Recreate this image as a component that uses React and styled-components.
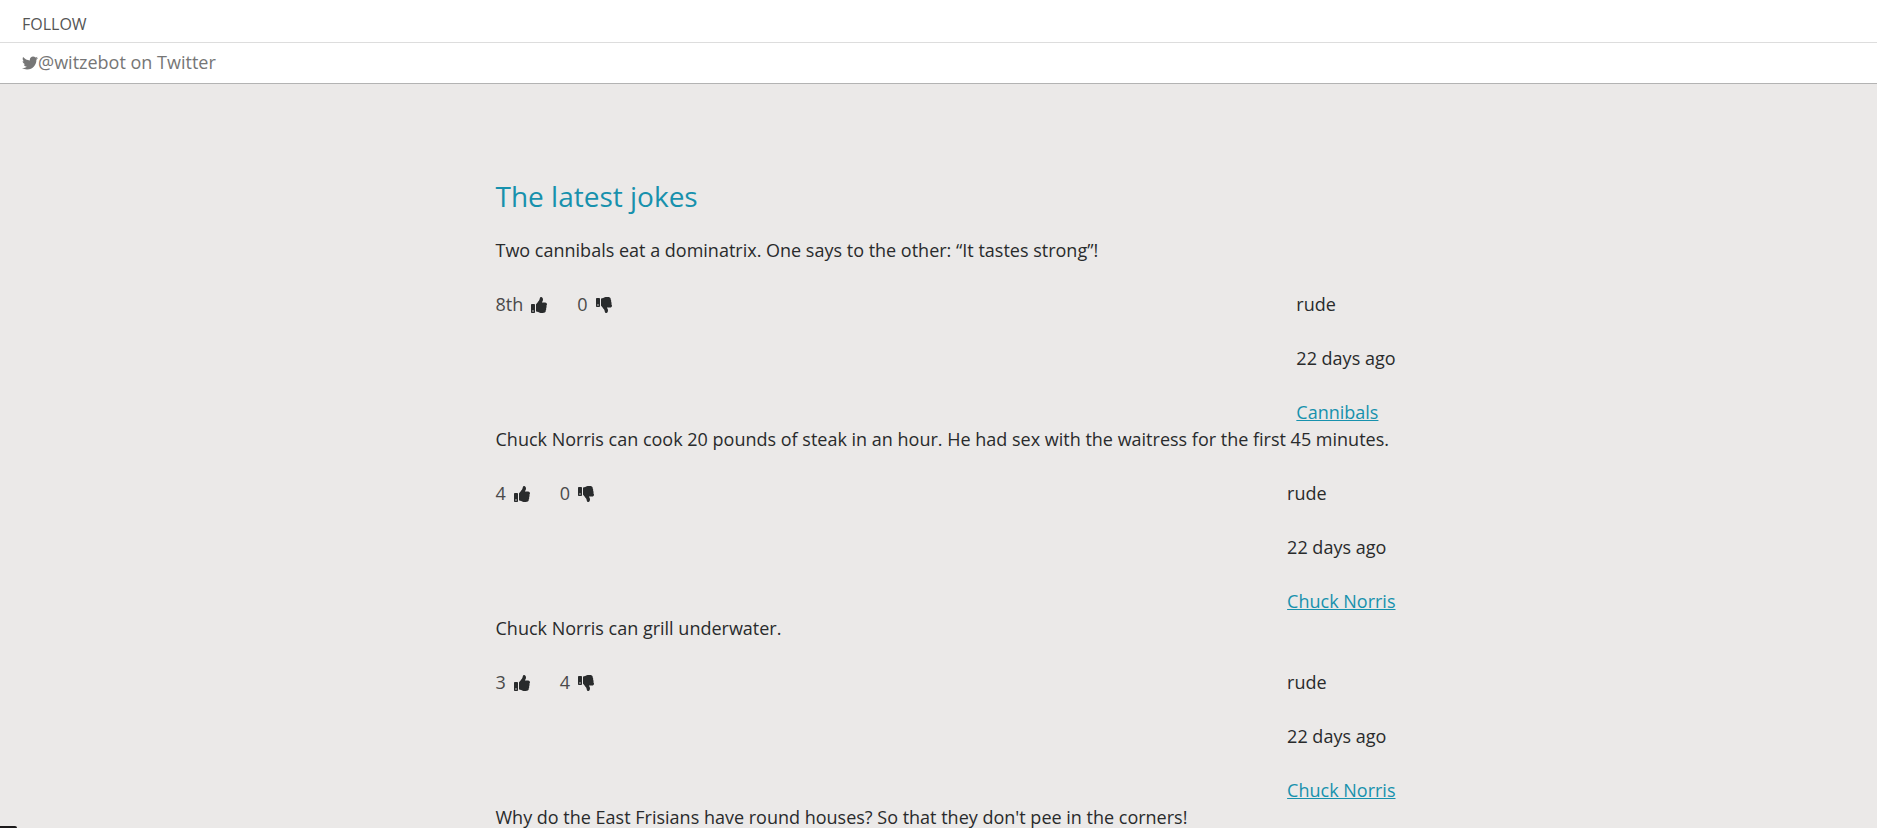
import styled, { createGlobalStyle } from "styled-components";
import { FaThumbsDown, FaThumbsUp, FaTwitter } from "react-icons/fa";

const jokes = [
    {
        id: 1,
        text: "Two cannibals eat a dominatrix. One says to the other: “It tastes strong”!",
        up: "8th",
        down: "0",
        tag: "rude",
        date: "22 days ago",
        category: "Cannibals",
    },
    {
        id: 2,
        text: "Chuck Norris can cook 20 pounds of steak in an hour. He had sex with the waitress for the first 45 minutes.",
        up: "4",
        down: "0",
        tag: "rude",
        date: "22 days ago",
        category: "Chuck Norris",
    },
    {
        id: 3,
        text: "Chuck Norris can grill underwater.",
        up: "3",
        down: "4",
        tag: "rude",
        date: "22 days ago",
        category: "Chuck Norris",
    },
    {
        id: 4,
        text: "Why do the East Frisians have round houses? So that they don't pee in the corners!",
    },
];

function Joke({ joke }) {
    const { text, up, down, tag, date, category } = joke;

    return (
        <JokeContainer>
            <p>{text}</p>
            {category && (
                <JokeFooter>
                    <Votes>
                        <VoteButton aria-label={`${up} like`}>{up} <FaThumbsUp /></VoteButton>
                        <VoteButton aria-label={`${down} dislike`}>{down} <FaThumbsDown /></VoteButton>
                    </Votes>
                    <JokeInfo>
                        <p>{tag}</p>
                        <p>{date}</p>
                        <CategoryLink href="#category">{category}</CategoryLink>
                    </JokeInfo>
                </JokeFooter>
            )}
        </JokeContainer>
    )
}

export default function App() {
    return (
        <>
            <GlobalStyle />
            <Header>
                <FollowTitle>FOLLOW</FollowTitle>
                <TwitterLink href="#twitter"><FaTwitter />@witzebot on Twitter</TwitterLink>
            </Header>
            <Main>
                <Title>The latest jokes</Title>
                {jokes.map((joke) => <Joke key={joke.id} joke={joke} />)}
            </Main>
            <CornerTab />
        </>
    )
}

const GlobalStyle = createGlobalStyle`
* {
    box-sizing: border-box;
}
html {
    scrollbar-width: none;
}
body {
    margin: 0;
    background: #ebe9e8;
    color: #292b2c;
    font-family: "Open Sans", sans-serif;
    font-size: 18px;
    line-height: 27px;
}
p {
    margin: 0;
}
`

const Header = styled.header`
background: #ffffff;
border-bottom: 1px solid #b3b3b3;
`

const FollowTitle = styled.h2`
margin: 0;
padding: 12px 22px 6px;
border-bottom: 1px solid #dddddd;
color: #555555;
font-size: 16px;
line-height: 24px;
font-weight: 400;
`

const TwitterLink = styled.a`
display: flex;
align-items: center;
padding: 6px 22px 7px;
color: #767676;
text-decoration: none;
svg {
    width: 16px;
    height: 16px;
}
`

const Main = styled.main`
max-width: 954px;
margin: 0 auto;
padding: 92px 20px 27px 34px;
`

const Title = styled.h1`
margin: 0 0 20px;
color: #1791ad;
font-size: 28px;
line-height: 41px;
font-weight: 400;
`

const JokeContainer = styled.article`
display: flex;
flex-direction: column;
gap: 27px;
`

const JokeFooter = styled.div`
display: flex;
justify-content: space-between;
align-items: flex-start;
`

const Votes = styled.div`
display: flex;
gap: 30px;
`

const VoteButton = styled.button`
display: flex;
align-items: center;
gap: 8px;
padding: 0;
border: none;
background: none;
color: #4a4a4a;
font: inherit;
cursor: pointer;
svg {
    width: 16px;
    height: 16px;
    color: #292b2c;
}
`

const JokeInfo = styled.div`
display: flex;
flex-direction: column;
gap: 27px;
`

const CategoryLink = styled.a`
color: #1791ad;
text-underline-offset: 1px;
`

const CornerTab = styled.div`
position: fixed;
left: 0;
bottom: 0;
width: 17px;
height: 2px;
border-top-right-radius: 2px;
background: #1c1a1b;
`
